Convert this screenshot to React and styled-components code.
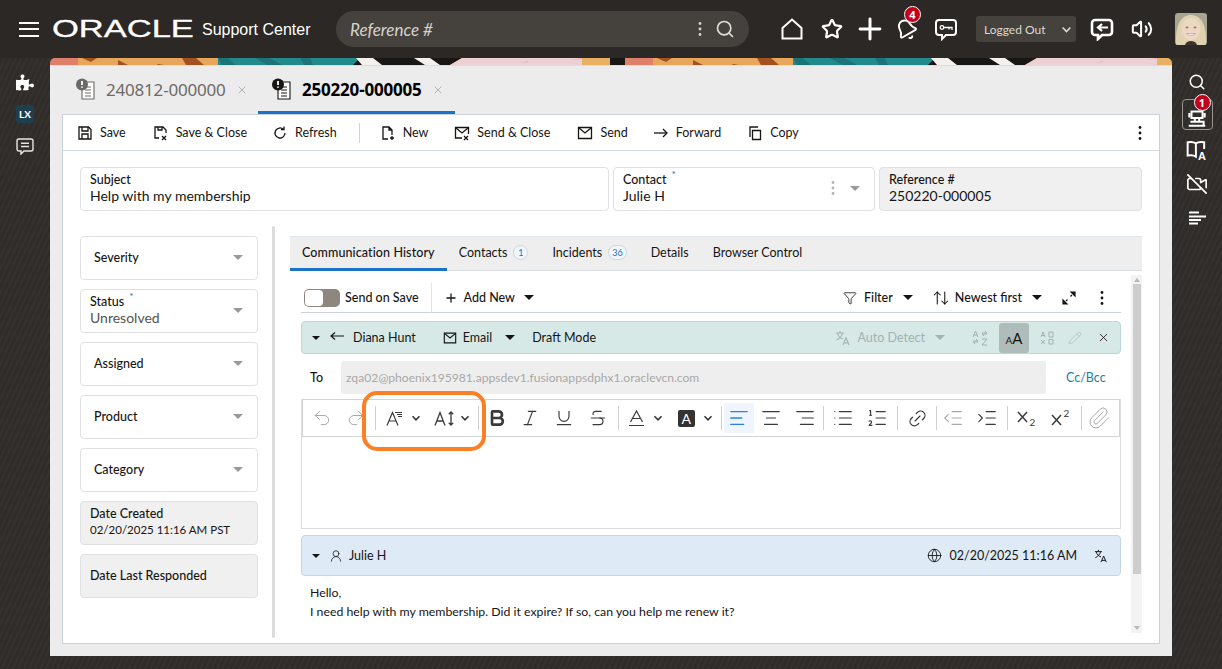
import styled, { createGlobalStyle } from "styled-components";
import {
  AlignCenter, AlignLeft, AlignRight, ArrowUpDown, Bell, Bold, Funnel, Globe, IndentDecrease, IndentIncrease,
  Italic, Link2, List, ListOrdered, Paperclip, Pencil, Plus, Redo2, Search, Star, Strikethrough,
  Underline, Undo2, UserRound, VideoOff, Volume2, X,
} from "lucide-react";
import { FaPuzzlePiece } from "react-icons/fa";

const GlobalStyle = createGlobalStyle`
  html, body { margin: 0; padding: 0; height: 100%; }
  body { font-family: Lato, "Noto Sans", "Liberation Sans", sans-serif; color: #161513; overflow: hidden; }
  * { box-sizing: border-box; }
`;

const Svg = ({ size = 16, children, sw = 1.3 }) => (
  <svg width={size} height={size} viewBox="0 0 16 16" fill="none" stroke="currentColor" strokeWidth={sw} style={{ flex: "none" }}>
    {children}
  </svg>
);

const Kebab = ({ color = "#161513" }) => (
  <svg width="4" height="16" viewBox="0 0 4 16" fill={color} style={{ flex: "none" }}>
    <circle cx="2" cy="2.5" r="1.4" /><circle cx="2" cy="8" r="1.4" /><circle cx="2" cy="13.5" r="1.4" />
  </svg>
);

const Caret = styled.span`
  flex: none;
  width: 0;
  height: 0;
  margin-right: ${(p) => p.$mr || 0}px;
  border-left: ${(p) => p.$size || 5}px solid transparent;
  border-right: ${(p) => p.$size || 5}px solid transparent;
  border-top: ${(p) => p.$size || 5}px solid ${(p) => p.$color || "#161513"};
`;

const Chevron = ({ color = "#333", size = 10 }) => (
  <svg width={size} height={size} viewBox="0 0 10 10" fill="none" stroke={color} strokeWidth="1.5" style={{ flex: "none" }}>
    <path d="M1.5 3.2 5 6.8l3.5-3.6" />
  </svg>
);

const Page = styled.div`
  position: relative;
  width: 1222px;
  height: 669px;
  display: grid;
  grid-template-rows: 58px 1fr;
  overflow: hidden;
  background: repeating-linear-gradient(115deg, #302c29 0 3px, #35312e 3px 5px);
`;

/* ---- header ---- */
const Header = styled.header`
  display: flex;
  align-items: center;
  background: #2b2826;
  color: #fff;
  padding-left: 19px;
`;
const Burger = styled.div`
  width: 20px;
  height: 15px;
  border-top: 2px solid #fff;
  border-bottom: 2px solid #fff;
  position: relative;
  margin-right: 13px;
  &::after {
    content: "";
    position: absolute;
    left: 0;
    right: 0;
    top: 4.5px;
    height: 2px;
    background: #fff;
  }
`;
const Logo = styled.div`
  width: 140px;
  margin-right: 10px;
  font-family: "Liberation Sans", sans-serif;
  font-size: 23px;
  line-height: 1;
  white-space: nowrap;
  transform: scaleX(1.5);
  transform-origin: left center;
  -webkit-text-stroke: 0.3px #fff;
`;
const AppName = styled.div`
  width: 134px;
  font-family: "Liberation Sans", sans-serif;
  font-size: 16px;
  margin-top: 2px;
`;
const SearchBar = styled.div`
  width: 413px;
  height: 36px;
  border-radius: 18px;
  background: #45413d;
  display: flex;
  align-items: center;
  padding: 0 14px 0 14px;
  margin-right: 30px;
  color: #e0ddd8;
`;
const SearchText = styled.span`
  flex: 1;
  font-style: italic;
  font-size: 17px;
  color: #d6d3ce;
`;
const SearchKebab = styled.span`
  display: flex;
  margin-right: 13px;
`;
const HeadIcon = styled.span`
  position: relative;
  flex: none;
  width: ${(p) => p.$w || 40}px;
  display: flex;
  justify-content: center;
  align-items: center;
  & > svg { flex: none; }
`;
const Badge = styled.span`
  position: absolute;
  top: ${(p) => p.$top}px;
  left: ${(p) => p.$left}px;
  width: 17px;
  height: 17px;
  border-radius: 50%;
  background: #c4001c;
  color: #fff;
  border: 1px solid #fff;
  font-family: "Noto Sans", sans-serif;
  font-size: 11px;
  font-weight: 700;
  line-height: 15px;
  text-align: center;
`;
const StatusSelect = styled.div`
  width: 100px;
  height: 26px;
  margin: 0 6px 0 15px;
  background: #45413d;
  border-radius: 3px;
  font-size: 12px;
  color: #dcd9d4;
  display: flex;
  align-items: center;
  justify-content: space-between;
  padding: 0 4px 0 8px;
`;
const Avatar = styled.div`
  width: 32px;
  height: 32px;
  margin-left: 13px;
  border-radius: 3px;
  overflow: hidden;
`;

/* ---- side rails and centre ---- */
const Body = styled.div`
  display: grid;
  grid-template-columns: 50px minmax(0, 1fr) 50px;
  min-height: 0;
`;
const Rail = styled.aside`
  display: flex;
  flex-direction: column;
  align-items: ${(p) => (p.$right ? "center" : "flex-start")};
  padding-top: 15px;
  padding-left: ${(p) => (p.$right ? 0 : "16px")};
  color: #fff;
`;
const RailItem = styled.div`
  position: relative;
  width: ${(p) => (p.$framed ? "31px" : "18px")};
  height: ${(p) => p.$h || 18}px;
  display: flex;
  align-items: center;
  justify-content: center;
  margin-bottom: ${(p) => p.$mb || 15}px;
  ${(p) => p.$framed && "border: 1px solid #9a9692; border-radius: 4px;"}
`;
const LxBadge = styled.div`
  width: 18px;
  height: 18px;
  border-radius: 3px;
  background: #1f3f50;
  color: #fff;
  font-size: 10px;
  font-weight: 700;
  line-height: 18px;
  text-align: center;
`;
const Center = styled.main`
  display: flex;
  flex-direction: column;
  margin-bottom: 13px;
  min-height: 0;
  min-width: 0;
`;
const Banner = styled.div`
  height: 7px;
  flex: none;
  overflow: hidden;
  border-radius: 5px 5px 0 0;
  line-height: 0;
`;
const Panel = styled.div`
  flex: 1;
  min-height: 0;
  background: #ececec;
  padding: 0 12px 12px;
  border-top: 1px solid #d6dde3;
  display: flex;
  flex-direction: column;
`;
const DocTabs = styled.div`
  height: 48px;
  flex: none;
  display: flex;
`;
const DocTab = styled.div`
  width: ${(p) => p.$w}px;
  display: flex;
  align-items: center;
  padding-left: 14px;
  padding-top: 2px;
  border-bottom: 3px solid ${(p) => (p.$active ? "#1a73c9" : "transparent")};
  font-family: "Noto Sans", sans-serif;
  font-size: 17px;
  font-weight: ${(p) => (p.$active ? 700 : 400)};
  color: ${(p) => (p.$active ? "#000" : "#6c6a68")};
  letter-spacing: -0.2px;
`;
const DocIcon = styled.span`
  margin-right: 10px;
  display: flex;
`;
const DocClose = styled.span`
  margin-left: 10px;
  display: flex;
  color: #b5b3b0;
`;
const Card = styled.div`
  flex: 1;
  min-height: 0;
  background: #fff;
  border: 1px solid #c9d2da;
  display: flex;
  flex-direction: column;
`;
const ActionBar = styled.div`
  height: 36px;
  flex: none;
  display: flex;
  align-items: center;
  padding: 0 17px 0 14px;
  border-bottom: 1px solid #d3dae0;
  font-size: 12.5px;
`;
const Action = styled.div`
  display: flex;
  align-items: center;
  gap: 7px;
  margin-right: ${(p) => p.$mr || 27}px;
  white-space: nowrap;
`;
const ActionSep = styled.span`
  width: 1px;
  height: 20px;
  background: #d3d3d3;
  margin: 0 20px 0 -6px;
`;
const Spacer = styled.span`
  flex: 1;
`;

/* ---- form ---- */
const Form = styled.div`
  flex: 1;
  min-height: 0;
  padding: 16px 17px 5px 17px;
  display: flex;
  flex-direction: column;
`;
const TopFields = styled.div`
  display: flex;
  gap: 4px;
`;
const Field = styled.div`
  flex: ${(p) => (p.$flex ? "1" : "none")};
  width: ${(p) => p.$w || "auto"};
  height: 44px;
  border: 1px solid #dfe1e3;
  border-radius: 4px;
  background: ${(p) => (p.$readonly ? "#f0f0f0" : "#fff")};
  padding: 0 9px 2px;
  display: flex;
  align-items: center;
  gap: ${(p) => p.$gap || 10}px;
`;
const FieldText = styled.div`
  flex: 1;
  min-width: 0;
  padding-left: ${(p) => p.$indent || 0}px;
`;
const Label = styled.div`
  font-size: 12.5px;
  line-height: 15px;
  font-weight: 500;
  white-space: nowrap;
`;
const Required = styled.sup`
  color: #227e9e;
  font-size: 10px;
  line-height: 0;
  margin-left: 5px;
`;
const Value = styled.div`
  font-size: 14px;
  line-height: 18px;
  color: ${(p) => p.$color || "#161513"};
  white-space: nowrap;
`;
const DateValue = styled(Value)`
  font-size: 11.5px;
`;
const Split = styled.div`
  flex: 1;
  min-height: 0;
  display: flex;
  margin-top: 15px;
`;
const LeftCol = styled.div`
  width: 178px;
  flex: none;
  padding-top: 10px;
  display: flex;
  flex-direction: column;
  gap: 9px;
`;
const Divider = styled.div`
  width: 3px;
  flex: none;
  background: #dcdcdc;
  border-radius: 2px;
  margin: 0 15px 0 14px;
`;
const RightCol = styled.div`
  flex: 1;
  min-width: 0;
  padding-top: 10px;
  display: flex;
  flex-direction: column;
`;
const SubTabs = styled.div`
  height: 35px;
  flex: none;
  background: #eeeeee;
  border-top: 1px solid #dfe5ea;
  border-bottom: 1px solid #d8dde2;
  display: flex;
  font-size: 12.5px;
`;
const SubTab = styled.div`
  display: flex;
  align-items: center;
  gap: 6px;
  padding: 0 12px;
  margin-bottom: -1px;
  border-bottom: 3px solid ${(p) => (p.$active ? "#1a73c9" : "transparent")};
  font-weight: ${(p) => (p.$active ? 500 : 400)};
  letter-spacing: ${(p) => (p.$active ? "0.1px" : "0")};
  white-space: nowrap;
`;
const Count = styled.span`
  min-width: 15px;
  height: 15px;
  padding: 0 3px;
  border-radius: 8px;
  border: 1px solid #c9d6e2;
  color: #1a73c9;
  font-size: 9px;
  line-height: 13px;
  text-align: center;
  background: #f2f6fa;
`;
const Pane = styled.div`
  flex: 1;
  min-height: 0;
  display: flex;
  overflow: hidden;
  padding-bottom: 5px;
`;
const Thread = styled.div`
  flex: 1;
  min-width: 0;
  padding: 12px 10px 0 11px;
  overflow: hidden;
  font-size: 12.5px;
`;
const Scrollbar = styled.div`
  width: 11px;
  flex: none;
  background: #f3f3f3;
  display: flex;
  flex-direction: column;
  align-items: center;
  justify-content: space-between;
  padding: 3px 0;
  margin-top: 4px;
`;
const ScrollThumb = styled.div`
  width: 8px;
  height: 290px;
  margin-top: -50px;
  background: #cdcdcd;
`;
const ScrollArrow = styled.span`
  width: 0;
  height: 0;
  border-left: 3px solid transparent;
  border-right: 3px solid transparent;
  ${(p) => (p.$up ? "border-bottom" : "border-top")}: 4px solid #b8b8b8;
`;
const ThreadBar = styled.div`
  height: 30px;
  display: flex;
  align-items: center;
  border-bottom: 1px solid #ccd3d9;
  padding: 0 0 0 3px;
  font-weight: 500;
`;
const Toggle = styled.span`
  width: 36px;
  height: 18px;
  border-radius: 5px;
  background: #8d8780;
  padding: 1px;
  margin-right: 5px;
  &::before {
    content: "";
    display: block;
    width: 18px;
    height: 16px;
    border-radius: 4px;
    background: #fff;
  }
`;
const BarSep = styled.span`
  width: 1px;
  height: 30px;
  background: #e3e3e3;
  margin: 0 12px;
`;
const BarItem = styled.span`
  display: flex;
  align-items: center;
  gap: ${(p) => p.$gap ?? 6}px;
  margin-right: ${(p) => p.$mr || 0}px;
  margin-left: ${(p) => p.$ml || 0}px;
  color: ${(p) => p.$color || "inherit"};
  font-size: ${(p) => p.$fs || "inherit"};
  white-space: nowrap;
`;
const MessageBar = styled.div`
  height: ${(p) => p.$h}px;
  margin-top: ${(p) => p.$mt}px;
  display: flex;
  align-items: center;
  padding: 0 10px;
  border-radius: 4px;
  background: ${(p) => p.$bg};
  border: 1px solid ${(p) => p.$line};
`;
const AaButton = styled.span`
  width: 30px;
  height: 30px;
  margin: 0 10px;
  border-radius: 3px;
  background: #aebdba;
  display: flex;
  align-items: baseline;
  justify-content: center;
  line-height: 30px;
  font-size: 15px;
  & > small { font-size: 10px; }
`;
const ToRow = styled.div`
  height: 33px;
  margin-top: 7px;
  display: flex;
  align-items: center;
  padding-left: 9px;
`;
const ToLabel = styled.span`
  width: 31px;
  font-size: 12.5px;
  font-weight: 500;
`;
const ToInput = styled.div`
  flex: 1;
  height: 33px;
  border-radius: 3px;
  background: #eeeeee;
  color: #a8a8a8;
  font-size: 12.1px;
  line-height: 33px;
  padding-left: 5px;
`;
const CcLink = styled.span`
  width: 75px;
  padding-left: 20px;
  color: #227e9e;
`;
const Editor = styled.div`
  margin-top: 5px;
  height: 130px;
  border: 1px solid #dcdcdc;
  border-top: 0;
`;
const RichBar = styled.div`
  height: 38px;
  display: flex;
  align-items: center;
  padding: 0 2px;
  border: 1px solid #d4d4d4;
  color: #3a3a3a;
`;
const RichBtn = styled.span`
  width: ${(p) => p.$w || 33.7}px;
  height: 30px;
  flex: none;
  display: flex;
  align-items: center;
  justify-content: center;
  gap: ${(p) => p.$gap || 3}px;
  border-radius: 2px;
  background: ${(p) => (p.$active ? "#eef5fd" : "transparent")};
  color: ${(p) => (p.$active ? "#2f7df0" : p.$muted ? "#a9a9a9" : "#3a3a3a")};
`;
const RichSep = styled.span`
  width: 1px;
  height: 24px;
  flex: none;
  background: #cfcfcf;
  margin: 0 ${(p) => p.$r ?? 2.5}px 0 ${(p) => p.$l ?? 3}px;
`;
const HighlightA = styled.span`
  width: 17px;
  height: 17px;
  border-radius: 2px;
  background: #333;
  color: #fff;
  font-size: 14px;
  line-height: 17px;
  text-align: center;
`;
const Message = styled.div`
  padding: 7px 9px 0;
  line-height: 19px;
  font-size: 12.3px;
`;
const Ring = styled.div`
  position: absolute;
  left: 362px;
  top: 391px;
  width: 124px;
  height: 60px;
  border: 4px solid #fd7e23;
  border-radius: 15px;
  pointer-events: none;
`;

const BannerArt = () => (
  <svg width="1122" height="7">
    <defs>
      <pattern id="banner-tile" width="575" height="7" patternUnits="userSpaceOnUse">
        <rect width="575" height="7" fill="#e8a65a" />
        <rect width="28" height="7" fill="#e0806a" />
        <path d="M32 0h15l-6 4zM68 2l10 5h-10zM108 6l6 1h-7zM132 0h14l8 7h-18z" fill="#a5501f" />
        <rect x="168" width="140" height="7" fill="#238a8c" />
        <path d="M168 0h10l8 7h-14zM205 0h15l12 7h-15zM250 0h10l3 7h-9z" fill="#1b7478" />
        <path d="M310 0h102l-12 7h-97z" fill="#191716" />
        <path d="M306 0h17l9 7h-20zM364 0h16l10 7h-15z" fill="#f4f1ec" />
        <path d="M412 0h120v7h-132z" fill="#ecd0d4" />
        <path d="M520 2l12-2v1zM470 5l8-2v1z" fill="#e6aeb6" />
        <rect x="532" width="28" height="7" fill="#e8b060" />
        <rect x="560" width="15" height="7" fill="#191716" />
      </pattern>
    </defs>
    <rect width="1122" height="7" fill="url(#banner-tile)" />
  </svg>
);

const TabDoc = ({ dark }) => (
  <svg width="20" height="24" viewBox="0 0 20 24" fill="none" stroke={dark ? "#161513" : "#6c6a68"} strokeWidth="1.1">
    <path d="M6 4h12v17H6z" fill="#fff" />
    <path d="M9 9h6M9 12h6M9 15h6M9 18h6" />
    <circle cx="6" cy="6.5" r="6" fill={dark ? "#161513" : "#6c6a68"} stroke="none" />
    <path d="M6 3v4M6 8.500v1.200" stroke="#fff" strokeWidth="1.800" />
  </svg>
);

const ACTIONS = [
  { label: "Save", mr: 27, icon: <><path d="M2 2h9.500L14 4.500V14H2z" /><path d="M5 2v4h6V2M5 14V9h6v5" /></> },
  { label: "Save & Close", mr: 25, icon: <><path d="M6 13H2V2h8l3 3v3M5 2v3h4V2" /><path d="m9 11 4 4m0-4-4 4" /></> },
  { label: "Refresh", mr: 28, icon: <><path d="M13 8a5 5 0 1 1-1.600-3.700" /><path d="M12 1.500v3H9" /></> },
  { sep: true },
  { label: "New", mr: 26, icon: <><path d="M8 14H3V2h6l3 3v5M9 2v3h3" /><path d="M12 11v4m-2-2h4" /></> },
  { label: "Send & Close", mr: 27, icon: <><path d="M8 13H1.500V2.500h13V9" /><path d="m2 3 6 5 6-5" /><path d="m10 11 4 4m0-4-4 4" /></> },
  { label: "Send", mr: 25, icon: <><path d="M1.500 2.500h13v11h-13z" /><path d="m2 3 6 5 6-5" /></> },
  { label: "Forward", mr: 26, icon: <><path d="M1 8h13" /><path d="m10 4 4 4-4 4" /></> },
  { label: "Copy", mr: 0, icon: <><path d="M5.500 5.500h8v9h-8z" /><path d="M3 12V2h8" /></> },
];

const LEFT_FIELDS = ["Severity", "Status", "Assigned", "Product", "Category"];

const FontFamilyIcon = () => (
  <svg width="18" height="18" viewBox="0 0 18 18" fill="none" stroke="currentColor" strokeWidth="1.200" style={{ flex: "none" }}>
    <path d="m1 16.500 5.500-13 5.500 13M3 12h7" />
    <path d="M9 3.500h7M11 5.500h5M12 7.500h4" strokeWidth="1" />
  </svg>
);
const FontSizeIcon = () => (
  <svg width="22" height="18" viewBox="0 0 22 18" fill="none" stroke="currentColor" strokeWidth="1.300" style={{ flex: "none" }}>
    <path d="m1 16.500 5-13 5 13M3 12h6" />
    <path d="M17 3v13M14.800 5.200 17 3l2.200 2.200M14.800 13.800 17 16l2.200-2.200" />
  </svg>
);
const TranslateIcon = ({ color = "currentColor", size = 16 }) => (
  <svg width={size} height={size} viewBox="0 0 16 16" fill="none" stroke={color} strokeWidth="1.100" style={{ flex: "none" }}>
    <path d="M1 3h8M5 1v2M7.500 3C7 6 4.500 8.500 1.500 10M2.500 3C3 6 5 8 8 9" />
    <path d="m8 15 3-7 3 7M9 13h4" />
  </svg>
);
const ScriptIcon = ({ sup }) => (
  <svg width="22" height="20" viewBox="0 0 22 20" fill="none" stroke="currentColor" strokeWidth="1.500" style={{ flex: "none" }}>
    <path d={sup ? "M2 7l9 10M11 7l-9 10" : "M2 4l9 10M11 4l-9 10"} />
    <text x="13.500" y={sup ? 9 : 18} fontSize="10" fontFamily="Lato, sans-serif" fill="currentColor" stroke="none">2</text>
  </svg>
);

export default function App() {
  return (
    <Page>
      <GlobalStyle />
      <Header>
        <Burger />
        <Logo>ORACLE</Logo>
        <AppName>Support Center</AppName>
        <SearchBar>
          <SearchText>Reference #</SearchText>
          <SearchKebab><Kebab color="#d6d3ce" /></SearchKebab>
          <Search size={20} strokeWidth={2} />
        </SearchBar>
        <HeadIcon $w={26}>
          <svg width="24" height="24" viewBox="0 0 24 24" fill="none" stroke="#fff" strokeWidth="2"><path d="M2.500 11 12 2.500l9.500 8.500v10.500h-19z" /></svg>
        </HeadIcon>
        <HeadIcon $w={54}><Star size={22} strokeWidth={2.400} /></HeadIcon>
        <HeadIcon $w={22}><Plus size={34} strokeWidth={2.100} /></HeadIcon>
        <HeadIcon $w={50}>
          <Bell size={23} strokeWidth={2} style={{ transform: "rotate(-30deg)" }} />
          <Badge $top={-12} $left={23}>4</Badge>
        </HeadIcon>
        <HeadIcon $w={30}>
          <svg width="24" height="24" viewBox="0 0 24 24" fill="none" stroke="#fff" strokeWidth="2">
            <path d="M5 3h14a3 3 0 0 1 3 3v9a3 3 0 0 1-3 3h-7l-4 4v-4H5a3 3 0 0 1-3-3V6a3 3 0 0 1 3-3z" />
            <circle cx="8" cy="10.500" r="1.800" strokeWidth="1.300" /><path d="M10 10.500h8v2.500M15 10.500v2" strokeWidth="1.300" />
          </svg>
        </HeadIcon>
        <StatusSelect>Logged Out<Chevron color="#dcd9d4" size={11} /></StatusSelect>
        <HeadIcon $w={40}>
          <svg width="24" height="24" viewBox="0 0 24 24" fill="none" stroke="#fff" strokeWidth="2.600">
            <path d="M5 3h14a3 3 0 0 1 3 3v9a3 3 0 0 1-3 3h-7l-4 4v-4H5a3 3 0 0 1-3-3V6a3 3 0 0 1 3-3z" />
            <path d="M18 10.500H9M12 7l-4 3.500 4 3.500" strokeWidth="2.200" />
          </svg>
        </HeadIcon>
        <HeadIcon $w={40}><Volume2 size={22} strokeWidth={2.200} /></HeadIcon>
        <Avatar>
          <svg width="32" height="32" viewBox="0 0 32 32">
            <rect width="32" height="32" fill="#a9a593" />
            <path d="M1 32C0 10 7 2 16 2s16 8 15 30z" fill="#dfd2ae" />
            <ellipse cx="16" cy="16" rx="9.500" ry="11" fill="#eed7c4" />
            <path d="M7 13C9 6 14 5 18 6c4 1 7 3 7 8-4-3-9-5-13-4-2 .500-4 2-5 3z" fill="#e6dcbc" />
            <path d="M10 32c1-3 3-4 6-4s5 1 6 4z" fill="#3d322c" />
            <ellipse cx="12" cy="14.500" rx="1.500" ry=".9" fill="#8f7a68" /><ellipse cx="20" cy="14.500" rx="1.500" ry=".9" fill="#8f7a68" />
            <path d="M11.500 20.500c2.500 2.500 6.500 2.500 9 0z" fill="#fff" stroke="#b9827a" strokeWidth=".6" />
          </svg>
        </Avatar>
      </Header>

      <Body>
        <Rail>
          <RailItem $mb={14}><FaPuzzlePiece size={19} /></RailItem>
          <RailItem $mb={14}><LxBadge>LX</LxBadge></RailItem>
          <RailItem>
            <svg width="18" height="18" viewBox="0 0 18 18" fill="none" stroke="#e8e6e3" strokeWidth="1.400">
              <path d="M3 2h12a2 2 0 0 1 2 2v8a2 2 0 0 1-2 2H8l-3 3v-3H3a2 2 0 0 1-2-2V4a2 2 0 0 1 2-2z" /><path d="M5 6.200h8M5 9.500h8" />
            </svg>
          </RailItem>
        </Rail>

        <Center>
          <Banner><BannerArt /></Banner>
          <Panel>
            <DocTabs>
              <DocTab $w={196}>
                <DocIcon><TabDoc /></DocIcon>240812-000000
                <DocClose><X size={12} strokeWidth={2} /></DocClose>
              </DocTab>
              <DocTab $w={197} $active>
                <DocIcon><TabDoc dark /></DocIcon>250220-000005
                <DocClose><X size={12} strokeWidth={2} /></DocClose>
              </DocTab>
            </DocTabs>
            <Card>
              <ActionBar>
                {ACTIONS.map((a, i) =>
                  a.sep ? (
                    <ActionSep key={i} />
                  ) : (
                    <Action key={a.label} $mr={a.mr}>
                      <Svg>{a.icon}</Svg>
                      {a.label}
                    </Action>
                  )
                )}
                <Spacer />
                <Kebab />
              </ActionBar>
              <Form>
                <TopFields>
                  <Field $w="529px">
                    <FieldText><Label>Subject</Label><Value>Help with my membership</Value></FieldText>
                  </Field>
                  <Field $w="262px" $gap={15}>
                    <FieldText><Label>Contact<Required>*</Required></Label><Value>Julie H</Value></FieldText>
                    <Kebab color="#b5b3b0" /><Caret $color="#999" $mr={5} />
                  </Field>
                  <Field $flex $readonly>
                    <FieldText><Label>Reference #</Label><Value>250220-000005</Value></FieldText>
                  </Field>
                </TopFields>
                <Split>
                  <LeftCol>
                    {LEFT_FIELDS.map((f) => (
                      <Field key={f}>
                        {f === "Status" ? (
                          <FieldText><Label>Status<Required>*</Required></Label><Value $color="#55524f">Unresolved</Value></FieldText>
                        ) : (
                          <FieldText $indent={4}><Label>{f}</Label></FieldText>
                        )}
                        <Caret $color="#999" $mr={5} />
                      </Field>
                    ))}
                    <Field $readonly>
                      <FieldText><Label>Date Created</Label><DateValue>02/20/2025 11:16 AM PST</DateValue></FieldText>
                    </Field>
                    <Field $readonly>
                      <FieldText><Label>Date Last Responded</Label></FieldText>
                    </Field>
                  </LeftCol>
                  <Divider />
                  <RightCol>
                    <SubTabs>
                      <SubTab $active>Communication History</SubTab>
                      <SubTab>Contacts<Count>1</Count></SubTab>
                      <SubTab>Incidents<Count>36</Count></SubTab>
                      <SubTab>Details</SubTab>
                      <SubTab>Browser Control</SubTab>
                    </SubTabs>
                    <Pane>
                      <Thread>
                        <ThreadBar>
                          <Toggle />
                          Send on Save
                          <BarSep />
                          <BarItem $mr={9}><Plus size={14} strokeWidth={2.200} />Add New</BarItem>
                          <Caret />
                          <Spacer />
                          <BarItem $mr={10} $gap={7}><Funnel size={14} strokeWidth={1.400} />Filter</BarItem>
                          <Caret />
                          <BarItem $ml={19} $mr={10} $gap={5}><ArrowUpDown size={18} strokeWidth={1.400} />Newest first</BarItem>
                          <Caret />
                          <BarItem $ml={20}>
                            <svg width="14" height="14" viewBox="0 0 14 14" fill="#161513" stroke="#161513" strokeWidth="1.200">
                              <path d="M9 1h4v4zM1 9v4h4zM10 4 8.500 5.500M4 10l1.500-1.500" />
                            </svg>
                          </BarItem>
                          <BarItem $ml={24} $mr={17}><Kebab /></BarItem>
                        </ThreadBar>
                        <MessageBar $h={33} $mt={8} $bg="#d6e9e7" $line="#bcd8d6">
                          <Caret $size={4.500} />
                          <BarItem $ml={10} $gap={7} $mr={27}>
                            <svg width="16" height="12" viewBox="0 0 16 12" fill="none" stroke="#161513" strokeWidth="1.200"><path d="M1 4h13M5 .5 1 4l4 3.500" /></svg>
                            Diana Hunt
                          </BarItem>
                          <BarItem $gap={6} $mr={13}>
                            <Svg size={14}><path d="M1.500 2.500h13v11h-13z" /><path d="m2 3 6 5 6-5" /></Svg>
                            Email
                          </BarItem>
                          <Caret />
                          <BarItem $ml={17}>Draft Mode</BarItem>
                          <Spacer />
                          <BarItem $color="#a4b1af" $gap={7} $mr={10}><TranslateIcon />Auto Detect</BarItem>
                          <Caret $color="#a4b1af" />
                          <BarItem $ml={26} $color="#a4b1af">
                            <svg width="18" height="18" viewBox="0 0 18 18" fill="none" stroke="currentColor" strokeWidth="1">
                              <path d="m2 8 2.500-6L7 8M3 6h3M11 4h5l-2-2M16 5h-5l2 2M2 12h5l-2-2M7 13H2l2 2M11 10h5l-5 6h5" />
                            </svg>
                          </BarItem>
                          <AaButton><small>A</small>A</AaButton>
                          <BarItem $color="#a4b1af">
                            <svg width="16" height="16" viewBox="0 0 16 16" fill="none" stroke="currentColor" strokeWidth="1">
                              <path d="m2 7 2-5 2 5M3 5.500h2M10 2h4v5h-4zM2 10l4 4M6 10l-4 4M10 9.500h4v4.500h-4z" />
                            </svg>
                          </BarItem>
                          <BarItem $ml={13} $color="#a4b1af"><Pencil size={14} strokeWidth={1} /></BarItem>
                          <BarItem $ml={15}><X size={13} strokeWidth={1.600} /></BarItem>
                        </MessageBar>
                        <ToRow>
                          <ToLabel>To</ToLabel>
                          <ToInput>zqa02@phoenix195981.appsdev1.fusionappsdphx1.oraclevcn.com</ToInput>
                          <CcLink>Cc/Bcc</CcLink>
                        </ToRow>
                        <Editor>
                          <RichBar>
                            <RichBtn $muted><Undo2 size={20} strokeWidth={1.200} /></RichBtn>
                            <RichBtn $muted><Redo2 size={20} strokeWidth={1.200} /></RichBtn>
                            <RichSep />
                            <RichBtn $w={49} $gap={7}><FontFamilyIcon /><Chevron /></RichBtn>
                            <RichBtn $w={49} $gap={4}><FontSizeIcon /><Chevron /></RichBtn>
                            <RichSep $l={1} $r={1} />
                            <RichBtn><Bold size={20} strokeWidth={3.200} /></RichBtn>
                            <RichBtn><Italic size={20} strokeWidth={1.400} /></RichBtn>
                            <RichBtn><Underline size={20} strokeWidth={1.400} /></RichBtn>
                            <RichBtn><Strikethrough size={20} strokeWidth={1.400} /></RichBtn>
                            <RichSep />
                            <RichBtn $w={49} $gap={8}>
                              <svg width="17" height="18" viewBox="0 0 17 18" fill="none" stroke="currentColor" strokeWidth="1.200" style={{ flex: "none" }}>
                                <path d="m2.500 13 6-11 6 11M5 9.500h7M1 16.500h15" />
                              </svg>
                              <Chevron />
                            </RichBtn>
                            <RichBtn $w={50} $gap={8}><HighlightA>A</HighlightA><Chevron /></RichBtn>
                            <RichSep $l={1} $r={2} />
                            <RichBtn $w={30} $active><AlignLeft size={22} strokeWidth={1.400} /></RichBtn>
                            <RichBtn $w={34}><AlignCenter size={22} strokeWidth={1.200} /></RichBtn>
                            <RichBtn $w={34}><AlignRight size={22} strokeWidth={1.200} /></RichBtn>
                            <RichSep $l={1} />
                            <RichBtn><List size={22} strokeWidth={1.300} /></RichBtn>
                            <RichBtn><ListOrdered size={22} strokeWidth={1.300} /></RichBtn>
                            <RichSep />
                            <RichBtn $w={33}><Link2 size={21} strokeWidth={1.400} style={{ transform: "rotate(-45deg)" }} /></RichBtn>
                            <RichSep $l={2} $r={0} />
                            <RichBtn $muted><IndentDecrease size={22} strokeWidth={1.200} /></RichBtn>
                            <RichBtn><IndentIncrease size={22} strokeWidth={1.200} /></RichBtn>
                            <RichSep />
                            <RichBtn><ScriptIcon /></RichBtn>
                            <RichBtn><ScriptIcon sup /></RichBtn>
                            <RichSep />
                            <RichBtn $w={30} $muted><Paperclip size={24} strokeWidth={1} /></RichBtn>
                          </RichBar>
                        </Editor>
                        <MessageBar $h={41} $mt={6} $bg="#deeaf6" $line="#c4d6e6">
                          <Caret $size={4.500} />
                          <BarItem $ml={9} $gap={6}><UserRound size={14} strokeWidth={1.300} />Julie H</BarItem>
                          <Spacer />
                          <BarItem $gap={8} $fs="12.5px"><Globe size={15} strokeWidth={1.400} />02/20/2025 11:16 AM</BarItem>
                          <BarItem $ml={17} $mr={2}><TranslateIcon size={14} /></BarItem>
                        </MessageBar>
                        <Message>
                          Hello,<br />
                          I need help with my membership. Did it expire? If so, can you help me renew it?
                        </Message>
                      </Thread>
                      <Scrollbar>
                        <ScrollArrow $up />
                        <ScrollThumb />
                        <ScrollArrow />
                      </Scrollbar>
                    </Pane>
                  </RightCol>
                </Split>
              </Form>
            </Card>
          </Panel>
        </Center>

        <Rail $right>
          <RailItem $mb={8}><Search size={18} strokeWidth={2} /></RailItem>
          <RailItem $framed $h={31} $mb={10}>
            <svg width="20" height="22" viewBox="0 0 18 20" fill="none" stroke="#fff" strokeWidth="1.800" style={{ marginTop: 6 }}>
              <path d="M4 4h10v6H4zM2 5.500v4M16 5.500v4M7 10v3M11 10v3M1.500 17h15M3 13.500h12v3.500" />
            </svg>
            <Badge $top={-6} $left={11}>1</Badge>
          </RailItem>
          <RailItem $h={20} $mb={15}>
            <svg width="22" height="22" viewBox="0 0 20 20" fill="none" stroke="#fff" strokeWidth="1.800" style={{ flex: "none" }}>
              <path d="M9 4C7 2.500 4 2.500 1.500 3v12c2.500-.5 5.500-.5 7.500 1zM9 4c2-1.500 5-1.500 7.500-1v6" />
              <text x="11" y="19" fontSize="10" fontWeight="700" fill="#fff" stroke="none" fontFamily="Liberation Sans">A</text>
            </svg>
          </RailItem>
          <RailItem $h={18} $mb={16}><VideoOff size={22} strokeWidth={1.800} style={{ flex: "none" }} /></RailItem>
          <RailItem>
            <svg width="17" height="14" viewBox="0 0 17 14" fill="none" stroke="#fff" strokeWidth="1.800">
              <path d="M0 1.500h10M0 5.500h17M0 9h12M0 12.500h9" />
            </svg>
          </RailItem>
        </Rail>
      </Body>
      <Ring />
    </Page>
  );
}
